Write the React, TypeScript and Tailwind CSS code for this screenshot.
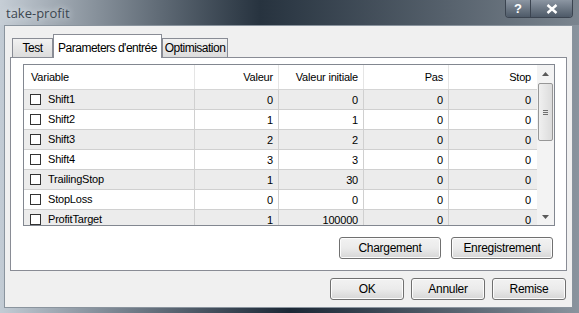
import React from "react";

type Row = {
    name: string;
    valeur: string;
    initiale: string;
    pas: string;
    stop: string;
};

const rows: Row[] = [
    { name: "Shift1", valeur: "0", initiale: "0", pas: "0", stop: "0" },
    { name: "Shift2", valeur: "1", initiale: "1", pas: "0", stop: "0" },
    { name: "Shift3", valeur: "2", initiale: "2", pas: "0", stop: "0" },
    { name: "Shift4", valeur: "3", initiale: "3", pas: "0", stop: "0" },
    { name: "TrailingStop", valeur: "1", initiale: "30", pas: "0", stop: "0" },
    { name: "StopLoss", valeur: "0", initiale: "0", pas: "0", stop: "0" },
    { name: "ProfitTarget", valeur: "1", initiale: "100000", pas: "0", stop: "0" },
];

function WinButton({ label, width }: { label: string; width: string }) {
    return (
        <button
            type="button"
            className={`${width} h-[22px] rounded-[3px] border border-[#707070] bg-gradient-to-b from-[#f2f2f2] via-[#ebebeb] to-[#d6d6d6] text-[12px] tracking-[-0.3px] text-black shadow-[inset_0_0_0_1px_#fcfcfc]`}
        >
            {label}
        </button>
    );
}

function Checkbox() {
    return <span className="block h-[11px] w-[11px] shrink-0 border border-[#333] bg-white" />;
}

export default function App() {
    return (
        <div
            className="relative flex h-[313px] w-[579px] flex-col overflow-hidden bg-gradient-to-r from-[#c3ccd5] via-[#1c2836] to-[#8a949e]"
            style={{ fontFamily: '"Liberation Sans", Arial, sans-serif' }}
        >
            {/* title bar */}
            <div className="flex h-[25px] shrink-0 items-start bg-gradient-to-r from-[#c6ced6] via-[#27333f] via-45% to-[#7b858f]">
                <span
                    className="pl-[6px] pt-[4px] text-[13px] text-[#3c4650]"
                    style={{ fontFamily: '"Open Sans", "Liberation Sans", sans-serif', textShadow: "0 0 6px #e8eef4" }}
                >
                    take-profit
                </span>
                <div className="ml-auto mr-[6px] flex h-[18px] overflow-hidden rounded-b-[4px] border border-t-0 border-[#3b4450]">
                    <div className="flex w-[25px] items-center justify-center border-r border-[#3b4450] bg-gradient-to-b from-[#8c96a2] to-[#4e5a68] text-[13px] font-bold text-white">
                        ?
                    </div>
                    <div className="flex w-[41px] items-center justify-center bg-gradient-to-b from-[#8c96a2] to-[#4e5a68]">
                        <svg width="12" height="10" viewBox="0 0 12 10">
                            <path d="M1.5 1 L10.5 9 M10.5 1 L1.5 9" stroke="#fff" strokeWidth="2.4" />
                        </svg>
                    </div>
                </div>
            </div>

            {/* client area */}
            <div className="mx-[4px] mb-[5px] mr-[6px] flex flex-1 flex-col border border-[#8a949e] bg-[#f0f0f0]">
                {/* tabs */}
                <div className="ml-[7px] mt-[7px] flex h-[24px] items-end whitespace-nowrap text-[12px] tracking-[-0.5px] text-black">
                    <div className="mb-[-1px] flex h-[20px] w-[41px] items-center justify-center border border-[#898c95] bg-gradient-to-b from-[#f2f2f2] to-[#dcdcdc]">
                        Test
                    </div>
                    <div className="relative z-10 mb-[-1px] flex h-[24px] w-[109px] items-start justify-center border border-b-0 border-[#898c95] bg-white pt-[4px]">
                        Parameters d'entrée
                    </div>
                    <div className="mb-[-1px] flex h-[20px] w-[66px] items-center justify-center border border-[#898c95] bg-gradient-to-b from-[#f2f2f2] to-[#dcdcdc]">
                        Optimisation
                    </div>
                </div>

                {/* tab panel */}
                <div className="mx-[5px] flex h-[214px] flex-col border border-[#898c95] bg-white pl-[12px] pr-[11px] pt-[6px]">
                    {/* grid */}
                    <div className="flex h-[162px] border border-[#828790] text-[11px] tracking-[-0.2px] text-black">
                        <div className="flex-1 overflow-hidden">
                            <div className="flex h-[25px] items-center border-b border-[#d5d5d5]">
                                <div className="w-[171px] border-r border-[#e5e5e5] pl-[7px] leading-[24px]">Variable</div>
                                <div className="w-[84px] border-r border-[#e5e5e5] pr-[5px] text-right leading-[24px]">Valeur</div>
                                <div className="w-[85px] border-r border-[#e5e5e5] pr-[5px] text-right leading-[24px]">Valeur initiale</div>
                                <div className="w-[85px] border-r border-[#e5e5e5] pr-[5px] text-right leading-[24px]">Pas</div>
                                <div className="w-[88px] pr-[6px] text-right leading-[24px]">Stop</div>
                            </div>
                            {rows.map((r, i) => (
                                <div
                                    key={r.name}
                                    className={`flex h-[20px] items-center border-b border-[#d0d0d0] ${i % 2 === 0 ? "bg-[#ececec]" : "bg-white"}`}
                                >
                                    <div className="flex h-full w-[171px] items-center gap-[7px] border-r border-[#d0d0d0] pl-[6px]">
                                        <Checkbox />
                                        <span>{r.name}</span>
                                    </div>
                                    <div className="h-full w-[84px] border-r border-[#d0d0d0] pr-[5px] text-right leading-[20px]">{r.valeur}</div>
                                    <div className="h-full w-[85px] border-r border-[#d0d0d0] pr-[5px] text-right leading-[20px]">{r.initiale}</div>
                                    <div className="h-full w-[85px] border-r border-[#d0d0d0] pr-[5px] text-right leading-[20px]">{r.pas}</div>
                                    <div className="h-full w-[88px] pr-[6px] text-right leading-[20px]">{r.stop}</div>
                                </div>
                            ))}
                        </div>
                        {/* scrollbar */}
                        <div className="flex w-[17px] shrink-0 flex-col bg-[#f3f3f3]">
                            <div className="flex h-[17px] items-center justify-center">
                                <svg width="7" height="4" viewBox="0 0 7 4">
                                    <path d="M0 4 L3.5 0 L7 4 Z" fill="#5a5a5a" />
                                </svg>
                            </div>
                            <div className="mx-[1px] mt-[1px] flex h-[58px] items-center justify-center rounded-[2px] border border-[#979797] bg-gradient-to-r from-[#f0f0f0] to-[#dcdcdc]">
                                <div className="flex flex-col gap-[1px]">
                                    <span className="block h-[1px] w-[5px] bg-[#6f6f6f]" />
                                    <span className="block h-[1px] w-[5px] bg-[#6f6f6f]" />
                                    <span className="block h-[1px] w-[5px] bg-[#6f6f6f]" />
                                </div>
                            </div>
                            <div className="mt-auto flex h-[17px] items-center justify-center">
                                <svg width="7" height="4" viewBox="0 0 7 4">
                                    <path d="M0 0 L3.5 4 L7 0 Z" fill="#5a5a5a" />
                                </svg>
                            </div>
                        </div>
                    </div>

                    <div className="mt-[11px] flex justify-end gap-[10px] pr-[2px]">
                        <WinButton label="Chargement" width="w-[102px]" />
                        <WinButton label="Enregistrement" width="w-[102px]" />
                    </div>
                </div>

                {/* dialog buttons */}
                <div className="mr-[6px] mt-[7px] flex justify-end gap-[7px]">
                    <WinButton label="OK" width="w-[74px]" />
                    <WinButton label="Annuler" width="w-[74px]" />
                    <WinButton label="Remise" width="w-[74px]" />
                </div>
            </div>
        </div>
    );
}
